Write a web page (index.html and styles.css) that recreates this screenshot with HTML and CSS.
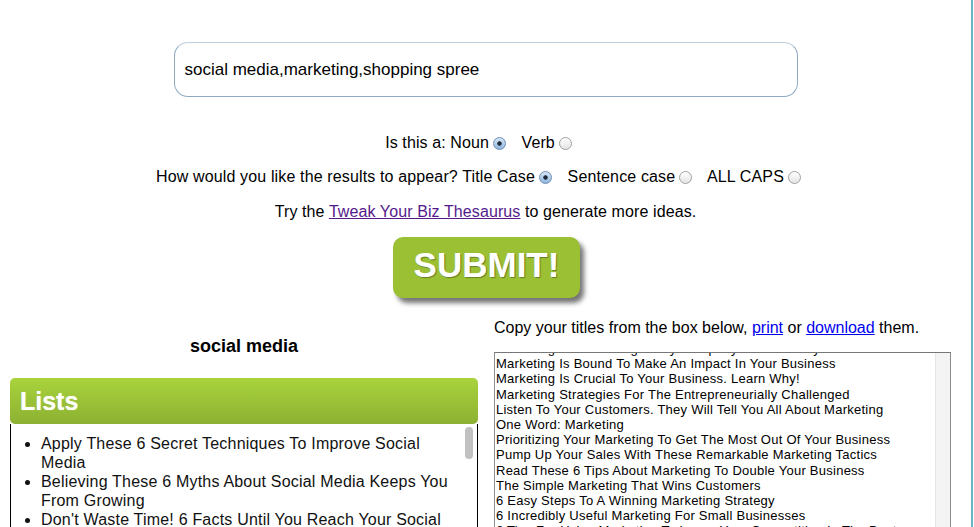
FILE: index.html
```html
<!DOCTYPE html>
<html>
<head>
<meta charset="utf-8">
<title>Title Generator</title>
<link rel="stylesheet" href="styles.css">
</head>
<body>
<div class="page">
  <div class="top">
    <div class="search">social media,marketing,shopping spree</div>
    <p class="opt">Is this a: Noun<span class="radio on"></span> Verb<span class="radio last"></span></p>
    <p class="opt opt2">How would you like the results to appear? Title Case<span class="radio on"></span> Sentence case<span class="radio"></span> ALL CAPS<span class="radio last"></span></p>
    <p class="tweak">Try the <a class="visited" href="#">Tweak Your Biz Thesaurus</a> to generate more ideas.</p>
    <button class="submit" type="button">SUBMIT!</button>
  </div>
  <div class="cols">
    <div class="left">
      <h3 class="kw">social media</h3>
      <div class="box-head">Lists</div>
      <div class="box-body">
        <ul class="titles">
          <li>Apply These 6 Secret Techniques To Improve Social Media</li>
          <li>Believing These 6 Myths About Social Media Keeps You From Growing</li>
          <li>Don't Waste Time! 6 Facts Until You Reach Your Social Media</li>
          <li>How To Teach Social Media Better Than Anyone Else</li>
        </ul>
        <div class="sb"><div class="sb-thumb"></div></div>
      </div>
    </div>
    <div class="right">
      <p class="copy">Copy your titles from the box below, <a href="#">print</a> or <a href="#">download</a> them.</p>
      <div class="ta">
        <div class="ta-text">
          <div class="ta-lines">
            <div>Marketing Is Something Every Company Needs Today</div>
            <div>Marketing Is Bound To Make An Impact In Your Business</div>
            <div>Marketing Is Crucial To Your Business. Learn Why!</div>
            <div>Marketing Strategies For The Entrepreneurially Challenged</div>
            <div>Listen To Your Customers. They Will Tell You All About Marketing</div>
            <div>One Word: Marketing</div>
            <div>Prioritizing Your Marketing To Get The Most Out Of Your Business</div>
            <div>Pump Up Your Sales With These Remarkable Marketing Tactics</div>
            <div>Read These 6 Tips About Marketing To Double Your Business</div>
            <div>The Simple Marketing That Wins Customers</div>
            <div>6 Easy Steps To A Winning Marketing Strategy</div>
            <div>6 Incredibly Useful Marketing For Small Businesses</div>
            <div>6 Tips For Using Marketing To Leave Your Competition In The Dust</div>
          </div>
        </div>
        <div class="ta-sb"></div>
      </div>
    </div>
  </div>
</div>
</body>
</html>
```

FILE: styles.css
```css
* { box-sizing: border-box; }
html, body { margin: 0; padding: 0; background: #fff; }
body {
  font-family: "Liberation Sans", Arial, Helvetica, sans-serif;
  color: #000;
  overflow: hidden;
}
.page {
  width: 973px;
  height: 527px;
  border-right: 2px solid #6bb3c3;
  padding-top: 42px;
  overflow: hidden;
}
.search {
  width: 624px;
  height: 55px;
  margin: 0 auto;
  border: 1px solid #8eaac3;
  border-top-color: #bfcedb;
  border-radius: 14px;
  padding: 0 10px 0;
  display: flex;
  align-items: center;
  font-size: 17px;
}
.opt {
  margin: 36px 0 0;
  text-align: center;
  font-size: 16px;
  line-height: 19px;
  padding-right: 14px;
  letter-spacing: 0.1px;
}
.opt2 { margin-top: 15px; letter-spacing: 0.14px; }
.radio {
  display: inline-block;
  width: 13px;
  height: 13px;
  border-radius: 50%;
  border: 1px solid #a0a0a0;
  background: linear-gradient(#ffffff, #e4e4e4);
  vertical-align: -2px;
  margin: 0 11px 0 4px;
}
.radio.on {
  border-color: #6f8db3;
  background: radial-gradient(circle, #1e2a3a 0 1.8px, rgba(0,0,0,0) 2.6px), linear-gradient(#d6e6f7, #8fb5df);
}
.radio.last { margin-right: 0; }
.tweak {
  margin: 16px 0 0;
  text-align: center;
  font-size: 16px;
  line-height: 19px;
  letter-spacing: 0.1px;
}
.tweak a.visited { color: #551a8b; }
.submit {
  display: block;
  margin: 16px auto 0;
  width: 187px;
  height: 61px;
  border: none;
  border-radius: 10px;
  background: #9cc034;
  box-shadow: 4px 5px 5px rgba(0, 0, 0, 0.55);
  color: #fff;
  font-family: "Liberation Sans", Arial, sans-serif;
  font-weight: bold;
  font-size: 35px;
  padding: 0 0 6px;
  text-shadow: 1px 1px 1px rgba(0, 0, 0, 0.35);
  position: relative;
  left: 1px;
}
.cols {
  display: flex;
  margin-top: 12px;
}
.left {
  width: 468px;
  margin-left: 10px;
}
.kw {
  margin: 27px 0 0;
  font-size: 18px;
  line-height: 19px;
  font-weight: bold;
  text-align: center;
}
.box-head {
  margin-top: 22px;
  height: 46px;
  border-radius: 5px;
  background: linear-gradient(#a9d33c, #8cb132);
  color: #fff;
  font-weight: bold;
  font-size: 25px;
  line-height: 46px;
  padding-left: 10px;
  text-shadow: 0 0 1px rgba(255,255,255,0.6);
}
.box-body {
  display: flex;
  height: 160px;
  border: 1px solid #000;
  border-top: none;
  margin-top: 0;
}
.titles {
  flex: 1;
  margin: 0;
  padding: 10px 4px 0 30px;
  font-size: 16px;
  line-height: 19px;
  color: #111;
  list-style: disc;
  letter-spacing: 0.2px;
}
.sb {
  width: 15px;
  padding: 3px 3px 0 3px;
}
.sb-thumb {
  width: 8px;
  height: 32px;
  border-radius: 4px;
  background: #c1c1c1;
}
.right {
  width: 457px;
  margin-left: 16px;
}
.copy {
  margin: 8px 0 0;
  font-size: 16px;
  line-height: 19px;
}
.copy a { color: #0000ee; }
.ta {
  display: flex;
  margin-top: 15px;
  height: 200px;
  border: 1px solid #8c8c8c;
  border-top-color: #777;
}
.ta-text {
  flex: 1;
  overflow: hidden;
  padding-left: 1px;
  font-size: 13px;
  letter-spacing: 0.25px;
  line-height: 15.2px;
  white-space: nowrap;
}
.ta-lines { margin-top: -12px; }
.ta-sb {
  width: 15px;
  background: #f4f4f4;
  border-left: 1px solid #e6e6e6;
}
```
